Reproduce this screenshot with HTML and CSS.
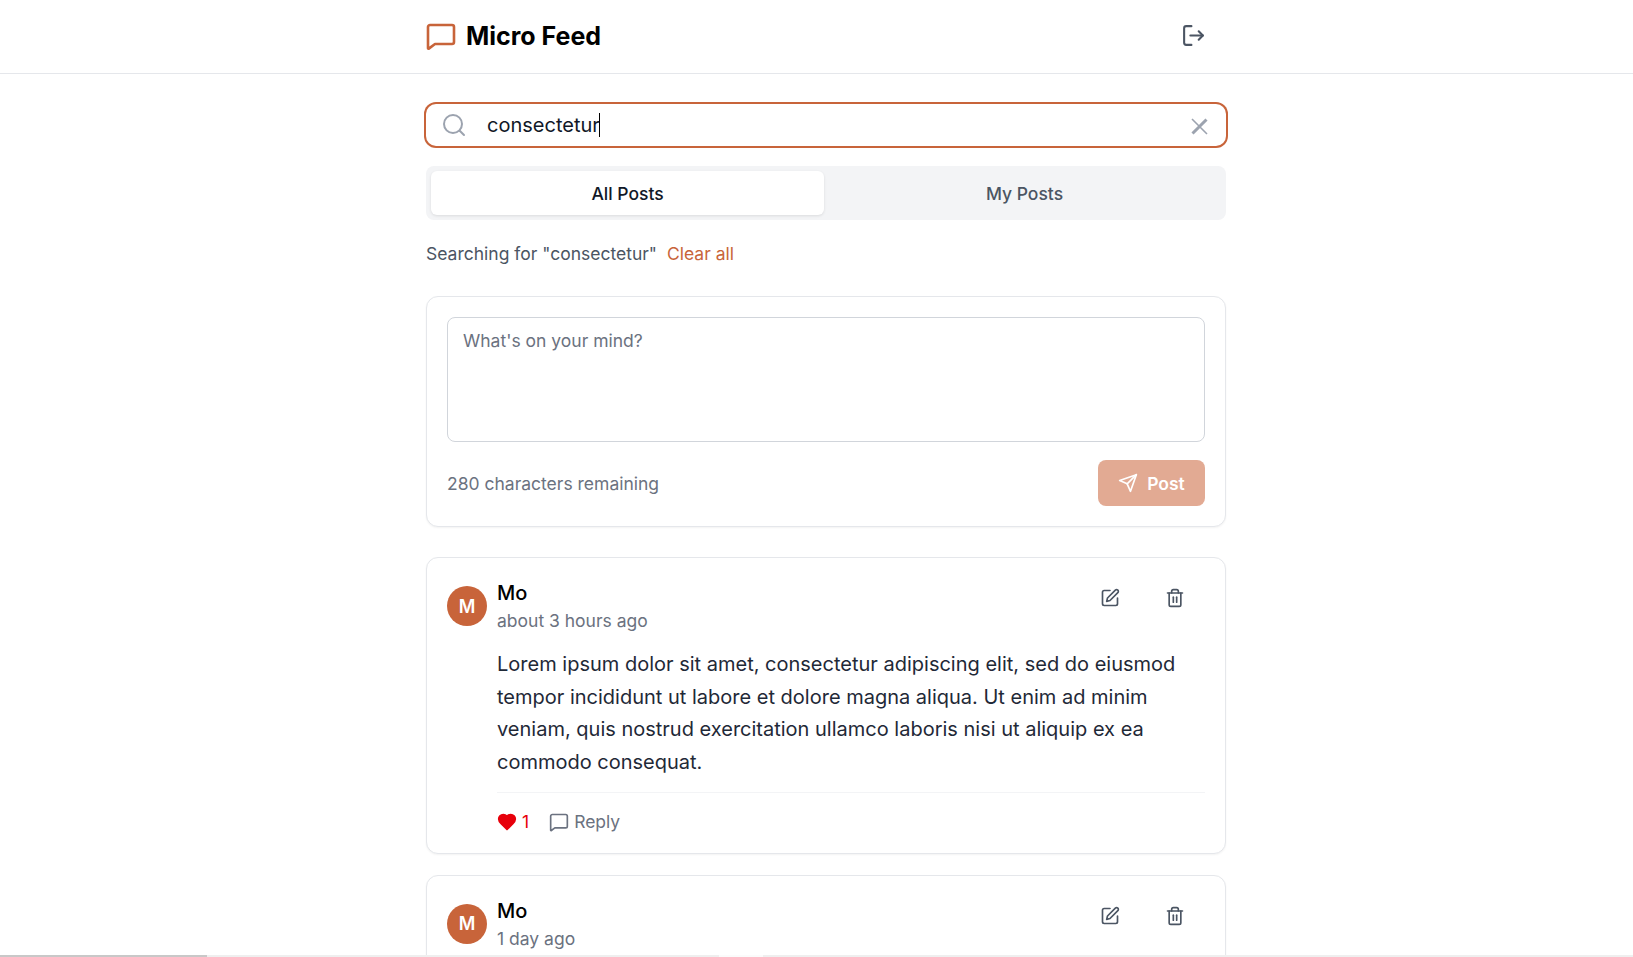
FILE: index.html
```html
<!DOCTYPE html>
<html lang="en">
<head>
  <meta charset="UTF-8" />
  <meta name="viewport" content="width=device-width, initial-scale=1.0" />
  <title>Micro Feed</title>
  <link rel="stylesheet" href="styles.css">
</head>
<body>
  <header class="topbar">
    <div class="topbar-inner">
      <div class="brand">
        <svg class="brand-icon" viewBox="0 0 32 32" fill="none" stroke="#c8643a" stroke-width="2.600" stroke-linejoin="round" stroke-linecap="round"><path d="M5 5h22a2 2 0 0 1 2 2v15a2 2 0 0 1-2 2H10l-6.200 4.600a.5.5 0 0 1-.8-.4V7a2 2 0 0 1 2-2z"/></svg>
        <span class="brand-name">Micro Feed</span>
      </div>
      <button class="icon-btn logout">
        <svg width="25" height="25" viewBox="0 0 24 24" fill="none" stroke="#4b5563" stroke-width="2" stroke-linecap="round" stroke-linejoin="round"><path d="M10 3H5a2 2 0 0 0-2 2v14a2 2 0 0 0 2 2h5"/><path d="M17 16l4-4-4-4"/><path d="M21 12H9"/></svg>
      </button>
    </div>
  </header>

  <main class="page">
    <div class="search">
      <svg class="search-icon" width="24" height="24" viewBox="0 0 24 24" fill="none" stroke="#9ca3af" stroke-width="2" stroke-linecap="round" stroke-linejoin="round"><circle cx="11" cy="11" r="9"/><path d="M22 22l-4.300-4.300"/></svg>
      <span class="search-text">consectetur</span><span class="caret"></span>
      <svg class="search-clear" width="20" height="20" viewBox="0 0 20 20" fill="none" stroke="#9ca3af" stroke-width="1.600"><path d="M3 2l15 15M17 2L3 16M18 3L4 17"/></svg>
    </div>

    <div class="tabs">
      <button class="tab tab-active">All Posts</button>
      <button class="tab">My Posts</button>
    </div>

    <p class="search-note">Searching for "consectetur" <a class="clear-link">Clear all</a></p>

    <section class="card composer">
      <div class="composer-box">What's on your mind?</div>
      <div class="composer-foot">
        <span class="remaining">280 characters remaining</span>
        <button class="post-btn">
          <svg width="20" height="20" viewBox="0 0 24 24" fill="none" stroke="#fff" stroke-width="2" stroke-linecap="round" stroke-linejoin="round"><path d="M22 2L11 13"/><path d="M22 2l-7 20-4-9-9-4z"/></svg>
          Post
        </button>
      </div>
    </section>

    <article class="card post">
      <div class="post-head">
        <div class="avatar">M</div>
        <div class="post-meta">
          <div class="author">Mo</div>
          <div class="time">about 3 hours ago</div>
        </div>
        <div class="post-actions">
          <svg width="20" height="20" viewBox="0 0 24 24" fill="none" stroke="#4b5563" stroke-width="2" stroke-linecap="round" stroke-linejoin="round"><path d="M12 3H5a2 2 0 0 0-2 2v14a2 2 0 0 0 2 2h14a2 2 0 0 0 2-2v-7"/><path d="M18.400 2.600a2.100 2.100 0 0 1 3 3L12 15l-4 1 1-4z"/></svg>
          <svg width="20" height="20" viewBox="0 0 24 24" fill="none" stroke="#4b5563" stroke-width="2" stroke-linecap="round" stroke-linejoin="round"><path d="M3 6h18"/><path d="M19 6v14a2 2 0 0 1-2 2H7a2 2 0 0 1-2-2V6"/><path d="M8 6V4a2 2 0 0 1 2-2h4a2 2 0 0 1 2 2v2"/><path d="M10 11v6"/><path d="M14 11v6"/></svg>
        </div>
      </div>
      <div class="post-body">
        <p class="post-text">Lorem ipsum dolor sit amet, consectetur adipiscing elit, sed do eiusmod tempor incididunt ut labore et dolore magna aliqua. Ut enim ad minim veniam, quis nostrud exercitation ullamco laboris nisi ut aliquip ex ea commodo consequat.</p>
        <div class="post-foot">
          <span class="likes">
            <svg width="20" height="20" viewBox="0 0 24 24" fill="#e7000b" stroke="#e7000b" stroke-width="2" stroke-linejoin="round"><path d="M19 14c1.500-1.500 3-3.200 3-5.500A5.500 5.500 0 0 0 16.500 3c-1.800 0-3 .5-4.500 2-1.500-1.500-2.700-2-4.500-2A5.500 5.500 0 0 0 2 8.500c0 2.300 1.500 4 3 5.500l7 7z"/></svg>
            1
          </span>
          <span class="reply">
            <svg width="20" height="20" viewBox="0 0 24 24" fill="none" stroke="#6b7280" stroke-width="2" stroke-linecap="round" stroke-linejoin="round"><path d="M4 3h16a2 2 0 0 1 2 2v12a2 2 0 0 1-2 2H7l-4.200 3.200a.5.5 0 0 1-.8-.4V5a2 2 0 0 1 2-2z"/></svg>
            Reply
          </span>
        </div>
      </div>
    </article>

    <article class="card post">
      <div class="post-head">
        <div class="avatar">M</div>
        <div class="post-meta">
          <div class="author">Mo</div>
          <div class="time">1 day ago</div>
        </div>
        <div class="post-actions">
          <svg width="20" height="20" viewBox="0 0 24 24" fill="none" stroke="#4b5563" stroke-width="2" stroke-linecap="round" stroke-linejoin="round"><path d="M12 3H5a2 2 0 0 0-2 2v14a2 2 0 0 0 2 2h14a2 2 0 0 0 2-2v-7"/><path d="M18.400 2.600a2.100 2.100 0 0 1 3 3L12 15l-4 1 1-4z"/></svg>
          <svg width="20" height="20" viewBox="0 0 24 24" fill="none" stroke="#4b5563" stroke-width="2" stroke-linecap="round" stroke-linejoin="round"><path d="M3 6h18"/><path d="M19 6v14a2 2 0 0 1-2 2H7a2 2 0 0 1-2-2V6"/><path d="M8 6V4a2 2 0 0 1 2-2h4a2 2 0 0 1 2 2v2"/><path d="M10 11v6"/><path d="M14 11v6"/></svg>
        </div>
      </div>
    </article>
  </main>

  <div class="bottom-strip">
    <span class="strip-thumb"></span>
    <span class="strip-track"></span>
    <span class="strip-gap"></span>
    <span class="strip-end"></span>
  </div>
</body>
</html>
```

FILE: styles.css
```css
html, body {
  height: 100%;
  overflow: hidden;
}
body {
  margin: 0;
  font-family: Inter, sans-serif;
  background-color: #fff;
  color: #111827;
}
.topbar {
  height: 74px;
  box-sizing: border-box;
  border-bottom: 1px solid #e5e7eb;
  padding: 0 0 2px 19px;
}
.topbar-inner {
  width: 800px;
  height: 100%;
  margin: 0 auto;
  display: flex;
  align-items: center;
  justify-content: space-between;
}
.brand {
  display: flex;
  align-items: center;
  gap: 9px;
}
.brand-icon {
  width: 32px;
  height: 32px;
  margin-left: -1px;
}
.brand-name {
  font-size: 25px;
  font-weight: 700;
  color: #000;
}
.icon-btn {
  border: none;
  background: none;
  padding: 8px;
  margin-right: 12px;
  display: flex;
}
.page {
  width: 800px;
  margin: 0 auto;
  padding: 30px 0 0 19px;
}
.search {
  height: 42px;
  border-radius: 10px;
  box-shadow: 0 0 0 2px #c8643a;
  display: flex;
  align-items: center;
  padding: 0 17px 0 16px;
  margin-bottom: 20px;
}
.search-icon {
  flex: none;
  margin-right: 21px;
}
.search-text {
  font-size: 20px;
  color: #111827;
}
.caret {
  width: 1px;
  height: 24px;
  margin-left: -1px;
  background: #000;
}
.search-clear {
  margin-left: auto;
  margin-top: 3px;
}
.tabs {
  height: 54px;
  box-sizing: border-box;
  background: #f3f4f6;
  border-radius: 8px;
  padding: 5px;
  display: flex;
  gap: 4px;
  margin-bottom: 20px;
}
.tab {
  flex: 1;
  border: none;
  background: none;
  border-radius: 6px;
  font-family: inherit;
  font-size: 17.5px;
  font-weight: 500;
  color: #4b5563;
}
.tab-active {
  background: #fff;
  color: #111827;
  box-shadow: 0 1px 3px rgba(0,0,0,0.1);
}
.search-note {
  margin: 0 0 28px;
  font-size: 17.5px;
  line-height: 28px;
  color: #4b5563;
}
.clear-link {
  color: #c8643a;
  margin-left: 5px;
}
.card {
  border: 1px solid #e5e7eb;
  border-radius: 12px;
  padding: 20px;
  box-shadow: 0 1px 2px rgba(0,0,0,0.05);
  background: #fff;
  margin-bottom: 21px;
}
.composer {
  margin-bottom: 30px;
}
.composer-box {
  height: 125px;
  box-sizing: border-box;
  border: 1px solid #d1d5db;
  border-radius: 8px;
  padding: 11px 15px;
  font-size: 17.5px;
  line-height: 23px;
  color: #6b7280;
}
.composer-foot {
  display: flex;
  align-items: center;
  justify-content: space-between;
  margin-top: 18px;
}
.remaining {
  font-size: 17.5px;
  color: #6b7280;
}
.post-btn {
  height: 46px;
  width: 107px;
  border: none;
  border-radius: 8px;
  background: #e2aa93;
  color: #fff;
  font-family: inherit;
  font-size: 17.5px;
  font-weight: 600;
  display: flex;
  align-items: center;
  justify-content: center;
  gap: 9px;
}
.post {
  padding-top: 21px;
  padding-bottom: 17px;
}
.post-head {
  display: flex;
  align-items: flex-start;
}
.avatar {
  width: 40px;
  height: 40px;
  margin-top: 7px;
  border-radius: 50%;
  background: #c8643a;
  color: #fff;
  font-weight: 600;
  font-size: 18px;
  display: flex;
  align-items: center;
  justify-content: center;
  flex: none;
}
.post-meta {
  margin-left: 10px;
}
.author {
  font-size: 20px;
  font-weight: 500;
  line-height: 28px;
  color: #000;
}
.time {
  font-size: 17.5px;
  line-height: 28px;
  color: #6b7280;
}
.post-actions {
  margin-left: auto;
  margin-top: 9px;
  margin-right: 20px;
  display: flex;
  gap: 45px;
}
.post-body {
  margin-left: 50px;
  margin-top: 13px;
}
.post-text {
  margin: 0;
  font-size: 20px;
  line-height: 32.700px;
  color: #1f2937;
}
.post-foot {
  border-top: 1px solid #f3f4f6;
  margin-top: 13px;
  padding-top: 15px;
  display: flex;
  align-items: center;
  gap: 20px;
  font-size: 17.5px;
  line-height: 28px;
}
.likes, .reply {
  display: flex;
  align-items: center;
  gap: 5px;
}
.likes {
  color: #e7000b;
}
.reply {
  color: #6b7280;
}
.bottom-strip {
  position: fixed;
  left: 0;
  right: 0;
  bottom: 0;
  height: 2px;
  display: flex;
  background: #fff;
}
.strip-thumb {
  width: 207px;
  background: #c8c8c8;
}
.strip-track {
  width: 512px;
  background: #efefef;
}
.strip-gap {
  width: 44px;
  background: #fbfbfb;
}
.strip-end {
  flex: 1;
  background: #efefef;
}
```
